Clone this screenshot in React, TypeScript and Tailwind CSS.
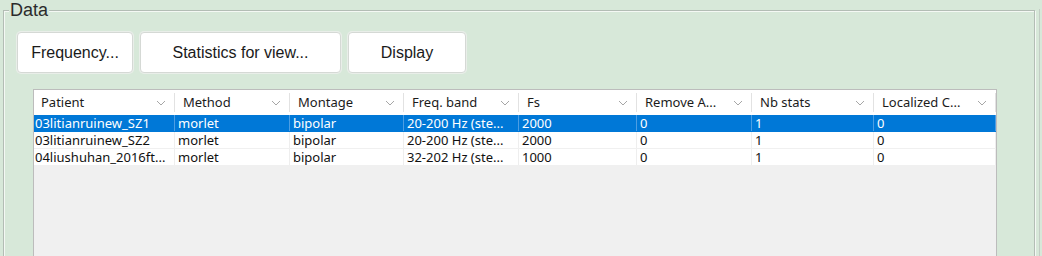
import { useState } from 'react';

type Row = {
    patient: string;
    method: string;
    montage: string;
    band: string;
    fs: string;
    removeAvg: string;
    nbStats: string;
    localized: string;
};

const columns = [
    { label: 'Patient', w: 'w-[141px]' },
    { label: 'Method', w: 'w-[115px]' },
    { label: 'Montage', w: 'w-[114px]' },
    { label: 'Freq. band', w: 'w-[115px]' },
    { label: 'Fs', w: 'w-[118px]' },
    { label: 'Remove A...', w: 'w-[115px]' },
    { label: 'Nb stats', w: 'w-[122px]' },
    { label: 'Localized C...', w: 'w-[122px]' },
];

const rows: Row[] = [
    { patient: '03litianruinew_SZ1', method: 'morlet', montage: 'bipolar', band: '20-200 Hz (ste...', fs: '2000', removeAvg: '0', nbStats: '1', localized: '0' },
    { patient: '03litianruinew_SZ2', method: 'morlet', montage: 'bipolar', band: '20-200 Hz (ste...', fs: '2000', removeAvg: '0', nbStats: '1', localized: '0' },
    { patient: '04liushuhan_2016ft...', method: 'morlet', montage: 'bipolar', band: '32-202 Hz (ste...', fs: '1000', removeAvg: '0', nbStats: '1', localized: '0' },
];

function Chevron() {
    return (
        <svg width="10" height="6" viewBox="0 0 10 6" className="shrink-0">
            <path d="M1 1 L5 5 L9 1" fill="none" stroke="#a6a6a6" strokeWidth="1" />
        </svg>
    );
}

function PushButton({ label, w }: { label: string; w: string }) {
    return (
        <button
            className={`${w} h-[41px] bg-white border border-[#d5d9d5] rounded-[4px] shadow-[0_0_0_1px_#e9eee9] text-[16px] text-[#1a1a1a] flex items-center justify-center`}
        >
            {label}
        </button>
    );
}

export default function App() {
    const [selected, setSelected] = useState(0);

    return (
        <div
            className="w-[1042px] h-[256px] bg-[#d7e8d9] overflow-hidden flex"
            style={{ fontFamily: '"Liberation Sans", Arial, sans-serif' }}
        >
            {/* Data group box */}
            <fieldset className="ml-[3px] w-[1032px] h-[300px] shrink-0 p-0 m-0 border border-[#b3bdb5] shadow-[1px_1px_0_#f4f8f4,inset_1px_1px_0_#f4f8f4]">
                <legend className="ml-[5px] px-[1px] text-[18px] leading-[21px] text-[#2b2b2b] bg-[#d7e8d9]">Data</legend>

                <div className="pl-[13px] pt-[11px] flex gap-[7px]">
                    <PushButton label="Frequency..." w="w-[116px]" />
                    <PushButton label="Statistics for view..." w="w-[201px]" />
                    <PushButton label="Display" w="w-[118px]" />
                </div>

                {/* Results table */}
                <div
                    className="ml-[29px] mt-[16px] w-[964px] h-[200px] border border-[#bcbcbc] bg-[#f0f0f0]"
                    style={{ fontFamily: '"Noto Sans", "Liberation Sans", sans-serif' }}
                >
                    <div className="flex h-[25px] bg-white">
                        {columns.map((c, i) => (
                            <div
                                key={c.label}
                                className={`${c.w} shrink-0 flex items-center justify-between ${i === 0 ? 'pl-[7px]' : 'pl-[8px]'} pr-[9px] relative`}
                            >
                                <span className="text-[13px] text-[#1b1b1b] whitespace-nowrap">{c.label}</span>
                                <Chevron />
                                <span className="absolute right-0 top-[3px] bottom-[3px] w-px bg-[#e2e2e2]" />
                            </div>
                        ))}
                    </div>

                    {rows.map((r, ri) => {
                        const isSel = ri === selected;
                        const cells = [r.patient, r.method, r.montage, r.band, r.fs, r.removeAvg, r.nbStats, r.localized];
                        return (
                            <div
                                key={r.patient}
                                onClick={() => setSelected(ri)}
                                className={`flex h-[17px] border-b ${isSel ? 'bg-[#0078d7] text-white border-[#0078d7]' : 'bg-white text-[#111111] border-[#f0f0f0]'}`}
                            >
                                {cells.map((v, ci) => (
                                    <div
                                        key={ci}
                                        className={`${columns[ci].w} shrink-0 border-r ${isSel ? 'border-[#4d9ee3]' : 'border-[#eeeeee]'} ${ci === 0 ? 'pl-[1px]' : 'pl-[3px]'} text-[13px] leading-[16px] whitespace-nowrap overflow-hidden`}
                                    >
                                        {v}
                                    </div>
                                ))}
                            </div>
                        );
                    })}
                </div>
            </fieldset>

            <div className="ml-[4px] mt-[9px] w-px h-[247px] bg-[#c3cdc5]" />
        </div>
    );
}
